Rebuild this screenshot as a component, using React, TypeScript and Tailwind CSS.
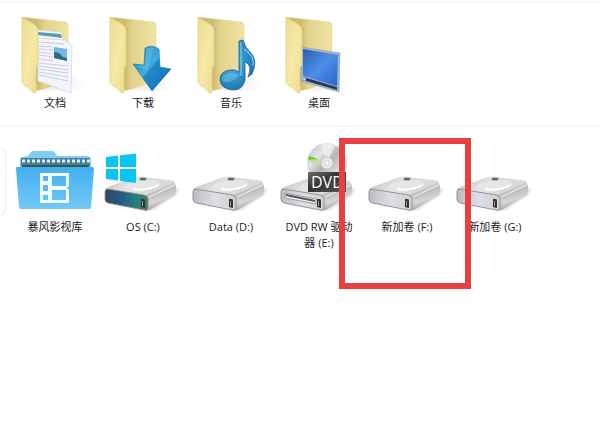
import type { ReactNode } from "react";

function Icon({ children }: { children: ReactNode }) {
  return (
    <svg viewBox="0 0 88 84" className="block h-21 w-22" aria-hidden="true">
      {children}
    </svg>
  );
}

function Gradients() {
  return (
    <svg className="absolute h-0 w-0" aria-hidden="true">
      <defs>
        <linearGradient id="folderBack" x1="0" y1="0" x2="1" y2="0">
          <stop offset="0.3" stopColor="#cdb96f" />
          <stop offset="0.5" stopColor="#e3d38c" />
          <stop offset="1" stopColor="#efe2a2" />
        </linearGradient>
        <linearGradient id="folderFlap" x1="0" y1="0" x2="1" y2="1">
          <stop offset="0" stopColor="#ebda90" />
          <stop offset="0.5" stopColor="#f6e9a8" />
          <stop offset="1" stopColor="#efdb86" />
        </linearGradient>
        <linearGradient id="shadow" x1="0" y1="0" x2="1" y2="0">
          <stop offset="0.4" stopColor="#d9d9d9" />
          <stop offset="1" stopColor="#ffffff" />
        </linearGradient>
        <linearGradient id="arrow" x1="0" y1="0" x2="1" y2="1">
          <stop offset="0" stopColor="#1b7fbd" />
          <stop offset="0.45" stopColor="#41aee0" />
          <stop offset="0.5" stopColor="#1f86c6" />
          <stop offset="1" stopColor="#1272b4" />
        </linearGradient>
        <radialGradient id="note" cx="0.35" cy="0.4" r="0.7">
          <stop offset="0" stopColor="#52bae6" />
          <stop offset="1" stopColor="#1670ab" />
        </radialGradient>
        <linearGradient id="screen" x1="0" y1="0" x2="1" y2="1">
          <stop offset="0" stopColor="#2c5fae" />
          <stop offset="0.5" stopColor="#4c8ee8" />
          <stop offset="1" stopColor="#2a63cb" />
        </linearGradient>
        <linearGradient id="driveTop" x1="0" y1="0" x2="1" y2="0.4">
          <stop offset="0" stopColor="#c0c0c0" />
          <stop offset="0.5" stopColor="#e6e6e6" />
          <stop offset="1" stopColor="#d2d2d2" />
        </linearGradient>
        <linearGradient id="driveSide" x1="0.3" y1="0" x2="0.6" y2="1">
          <stop offset="0" stopColor="#e2e2e2" />
          <stop offset="0.35" stopColor="#bdbdbd" />
          <stop offset="0.6" stopColor="#d6d6d6" />
          <stop offset="1" stopColor="#929292" />
        </linearGradient>
        <linearGradient id="driveFront" x1="0" y1="0" x2="1" y2="0">
          <stop offset="0" stopColor="#bcbcc0" />
          <stop offset="0.5" stopColor="#dedee8" />
          <stop offset="1" stopColor="#d0d0d4" />
        </linearGradient>
        <linearGradient id="systemFront" x1="0" y1="0" x2="1" y2="0">
          <stop offset="0" stopColor="#394655" />
          <stop offset="0.35" stopColor="#23598a" />
          <stop offset="0.7" stopColor="#23807f" />
          <stop offset="1" stopColor="#4a7a68" />
        </linearGradient>
        <linearGradient id="disc" x1="0" y1="0" x2="1" y2="1">
          <stop offset="0" stopColor="#bcbcbc" />
          <stop offset="0.3" stopColor="#e6e6e6" />
          <stop offset="0.5" stopColor="#b4b4b4" />
          <stop offset="0.75" stopColor="#dedede" />
          <stop offset="1" stopColor="#a8a8a8" />
        </linearGradient>
        <linearGradient id="dvdBar" x1="0" y1="0" x2="1" y2="1">
          <stop offset="0" stopColor="#6c6c6c" />
          <stop offset="0.45" stopColor="#333333" />
          <stop offset="1" stopColor="#5b5b5b" />
        </linearGradient>
        <linearGradient id="library" x1="0" y1="0" x2="0" y2="1">
          <stop offset="0" stopColor="#43b0ee" />
          <stop offset="1" stopColor="#71c9f8" />
        </linearGradient>
      </defs>
    </svg>
  );
}

function Folder({ children }: { children: ReactNode }) {
  return (
    <Icon>
      <path d="M27 79 57 60 76 76 64 80Z" fill="url(#shadow)" opacity="0.4" />
      <path
        d="M11 6 54 11Q57 11.500 57 14V70L26 80Z"
        fill="url(#folderBack)"
        stroke="#e2d392"
        strokeWidth="0.5"
      />
      {children}
      <path
        d="M11 6 24 14Q27 16 27 19V54L25 57 25 82 23 82 11 72Z"
        fill="url(#folderFlap)"
        stroke="#e0cd80"
        strokeWidth="0.6"
      />
    </Icon>
  );
}

function DocumentsIcon() {
  return (
    <Folder>
      <path d="M27 19 50 21 53 31 53 72 27 68Z" fill="#f2f5fa" stroke="#cfd6df" strokeWidth="0.6" />
      <path d="M27 21 50 23 51 27 27 24Z" fill="#5b9db2" />
      <path d="M27 27 54 29 61 34 60 82 27 70Z" fill="#f3f5fc" stroke="#cdd2dd" strokeWidth="0.7" />
      <path
        d="M28 31 53 33M28 35 42 36M28 38 42 39M28 41 42 43M28 44 42 46M28 48 42 50M28 52 57 55M28 55 57 59M28 58 57 62M28 61 57 66M28 64 57 70"
        stroke="#c3c8d5"
        strokeWidth="0.9"
      />
      <path d="M43 36 56 38V50L43 47Z" fill="#78b7e2" />
      <path d="M43 41Q48 41 50 44T56 47V50L43 47Z" fill="#2b6d83" />
    </Folder>
  );
}

function DownloadIcon() {
  return (
    <Folder>
      <path
        d="M46 37Q53 33 60 38L61 56 72 58 53 80 34 53 45 54Z"
        fill="url(#arrow)"
        stroke="#1d6fa8"
        strokeWidth="0.6"
      />
      <path d="M47 38Q51 36 55 37L48 59 37 55 46 55Z" fill="#70c6ec" opacity="0.45" />
    </Folder>
  );
}

function MusicIcon() {
  return (
    <Folder>
      <path
        d="M52 30 56 29Q58 37 64 42Q71 50 65 63L61 66Q66 54 58 51V69Q56 79 46 79Q34 78 33 69Q33 60 43 59Q48 58 52 61Z"
        fill="url(#note)"
        stroke="#185f91"
        strokeWidth="0.8"
      />
      <path d="M54 31V65M57 38Q68 45 66 55" stroke="#79cdec" strokeWidth="1.200" fill="none" />
      <path d="M35 66Q42 59 52 64Q47 72 36 71Z" fill="#8cd6f2" opacity="0.4" />
    </Folder>
  );
}

function DesktopIcon() {
  return (
    <Folder>
      <path d="M26 36 65 42 64 81 26 70Z" fill="#9fb3c9" stroke="#8597aa" strokeWidth="0.5" />
      <path d="M28 38 63 44 62 75 28 65Z" fill="url(#screen)" />
      <path d="M28 66 62 76V79L28 69Z" fill="#243b56" />
      <path d="M28 66 31 67V70L28 69Z" fill="#9ec7df" />
    </Folder>
  );
}

function Drive({ front = "url(#driveFront)", slot, children }: { front?: string; slot?: boolean; children?: ReactNode }) {
  return (
    <Icon>
      <path d="M50 76 77 52 81 54 78 60 56 75Z" fill="#d2d2d2" opacity="0.45" />
      <path d="M6 55Q7 53 10 52L35 43Q38 42 42 42L73 46Q76 47 76 50L49 63Z" fill="url(#driveTop)" stroke="#c6c6c6" strokeWidth="0.5" />
      <path d="M24 51Q31 45 48 44Q66 45 61 50Q54 57 37 58" fill="#e6e6e6" stroke="#d0d0d0" strokeWidth="0.6" />
      <path d="M34 54Q48 56 60 50" stroke="#ffffff" strokeWidth="1.500" fill="none" />
      <ellipse cx="44" cy="44" rx="3.500" ry="1.500" fill="#6a6a6a" />
      <path d="M46 60 74 48Q77 48 77 51V57Q77 59 74 61L51 75 46 76Z" fill="url(#driveSide)" />
      <path d="M50 62 76 50" stroke="#f0f0f0" strokeWidth="1" />
      <path
        d="M9 54 45 60Q49 61 49 64V72Q49 76 45 75L9 68Q6 67 6 64V57Q6 54 9 54Z"
        fill={front}
        stroke="#8c8c8c"
        strokeWidth="0.9"
      />
      {slot && (
        <>
          <path d="M10 58 41 64V69L10 63Z" fill="#eeeeee" stroke="#808080" strokeWidth="0.7" />
          <path d="M11 59 40 65V67L11 61Z" fill="#555555" />
        </>
      )}
      <path d="M42 64H45Q46 64 46 66V73L42 72Z" fill="#2c382c" />
      <path d="M43 66H44V71H43Z" fill="#8aa777" />
      {children}
    </Icon>
  );
}

function SystemDriveIcon() {
  return (
    <Drive front="url(#systemFront)">
      <path
        d="M7 22 19 20.500V32H7ZM21 20.300 37 18.500V32H21ZM7 34H19V45.500L7 44ZM21 34H37V48L21 46Z"
        fill="#08c5f4"
      />
    </Drive>
  );
}

function DvdIcon() {
  return (
    <Drive slot>
      <circle cx="52" cy="28" r="19.500" fill="url(#disc)" stroke="#c0c0c0" strokeWidth="0.5" />
      <path d="M52 28 46 9Q53 7 60 10Z" fill="#f4f4f4" opacity="0.7" />
      <path d="M46 26 34 20 33 25 38 29Z" fill="#c2e0a0" />
      <path d="M43 24 34 21 33 25Z" fill="#5cd436" />
      <circle cx="52" cy="28" r="6" fill="#e9e9e9" stroke="#c7c7c7" />
      <circle cx="52" cy="28" r="2.500" fill="#ffffff" stroke="#b8b8b8" strokeWidth="0.6" />
      <path d="M33 37H71V57H33Z" fill="url(#dvdBar)" />
      <text x="36" y="53" fill="#ffffff" fontSize="16" fontFamily="Open Sans, sans-serif">
        DVD
      </text>
    </Drive>
  );
}

function LibraryIcon() {
  return (
    <Icon>
      <path d="M9 34V24Q9 22 12 22L17 21 20 17Q21 16 23 16H41Q43 16 44 18L46 21H77Q80 22 80 25V34Z" fill="#7dcdf5" />
      <path d="M10 23H79V31H10Z" fill="#4a7f9c" />
      <path d="M11 26H79" stroke="#d9eef7" strokeWidth="3" strokeDasharray="3 2" />
      <path d="M11 30H78V33H11Z" fill="#315c4e" />
      <path d="M6 32H81Q83 32 83 34L80 72Q80 74 78 74H10Q8 74 8 72L5 34Q5 32 6 32Z" fill="url(#library)" />
      <path
        fillRule="evenodd"
        d="M29 38H58V51L56 53 58 55V68H29ZM32 41V46H37V41ZM32 50V56H37V50ZM32 60V65H37V60ZM41 41V51H55V41ZM41 55V65H55V55Z"
        fill="#f4fbff"
      />
    </Icon>
  );
}

function Item({ label, icon, marked }: { label: string; icon: ReactNode; marked?: boolean }) {
  return (
    <li className="relative w-22">
      <button type="button" className="block w-full text-center">
        {icon}
        <span className="block px-2 text-[11px] leading-4">{label}</span>
      </button>
      {marked && (
        <span className="pointer-events-none absolute -left-6 -right-5 top-[3px] z-10 h-[151px] border-6 border-[#e74041]" />
      )}
    </li>
  );
}

export default function App() {
  return (
    <main
      className="min-h-screen bg-white pt-px text-[#1c1c1c]"
      style={{ fontFamily: '"Open Sans", "Noto Sans CJK SC", sans-serif' }}
    >
      <Gradients />
      <section className="border-t-2 border-[#f5f5f5] pt-2 pb-3.5">
        <ul className="flex flex-wrap pl-[11px]">
          <Item label="文档" icon={<DocumentsIcon />} />
          <Item label="下载" icon={<DownloadIcon />} />
          <Item label="音乐" icon={<MusicIcon />} />
          <Item label="桌面" icon={<DesktopIcon />} />
        </ul>
      </section>
      <section className="relative border-t-2 border-[#f5f5f5] pt-2">
        <span className="absolute left-0 top-5 h-17 w-1.5 rounded-r-lg border-y border-r border-[#eeeeee]" />
        <ul className="flex flex-wrap pl-[11px]">
          <Item label="暴风影视库" icon={<LibraryIcon />} />
          <Item label="OS (C:)" icon={<SystemDriveIcon />} />
          <Item label="Data (D:)" icon={<Drive />} />
          <Item label="DVD RW 驱动器 (E:)" icon={<DvdIcon />} />
          <Item label="新加卷 (F:)" icon={<Drive />} marked />
          <Item label="新加卷 (G:)" icon={<Drive />} />
        </ul>
      </section>
    </main>
  );
}
